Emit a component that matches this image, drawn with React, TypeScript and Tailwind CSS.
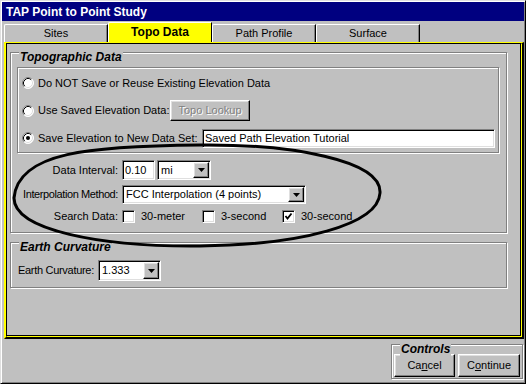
import React from "react";

const raised =
  "border border-t-white border-l-white border-r-black border-b-black shadow-[inset_-1px_-1px_0_#808080,inset_1px_1px_0_#dfdfdf] bg-[#c0c0c0]";
const sunken =
  "border border-t-[#808080] border-l-[#808080] border-r-white border-b-white shadow-[inset_1px_1px_0_#000,inset_-1px_-1px_0_#dfdfdf] bg-white p-px";

function Radio({ checked }: { checked?: boolean }) {
  return (
    <svg width="12" height="12" viewBox="0 0 12 12" className="shrink-0">
      <circle cx="6" cy="6" r="5.5" fill="white" />
      <path d="M2.11 9.89 A5.5 5.5 0 0 1 9.89 2.11" stroke="#808080" fill="none" />
      <path d="M9.89 2.11 A5.5 5.5 0 0 1 2.11 9.89" stroke="#ffffff" fill="none" />
      <path d="M2.82 9.18 A4.5 4.5 0 0 1 9.18 2.82" stroke="#000" fill="none" />
      <path d="M9.18 2.82 A4.5 4.5 0 0 1 2.82 9.18" stroke="#dfdfdf" fill="none" />
      {checked && <circle cx="6" cy="6" r="2" fill="#000" />}
    </svg>
  );
}

function Check({ checked }: { checked?: boolean }) {
  return (
    <div className={`w-[13px] h-[13px] shrink-0 ${sunken} flex items-center justify-center`}>
      {checked && (
        <svg width="9" height="9" viewBox="0 0 9 9">
          <polyline points="1.5,4 3.5,6.5 7.5,1.5" stroke="#000" strokeWidth="1.8" fill="none" />
        </svg>
      )}
    </div>
  );
}

function DropBtn() {
  return (
    <div className={`w-[16px] h-full shrink-0 flex items-center justify-center ${raised}`}>
      <svg width="7" height="4" viewBox="0 0 7 4">
        <polygon points="0,0 7,0 3.5,4" fill="#000" />
      </svg>
    </div>
  );
}

function Select({ value, className }: { value: string; className: string }) {
  return (
    <div className={`flex shrink-0 ${sunken} ${className}`}>
      <span className="flex-1 pl-[2px] flex items-center whitespace-nowrap overflow-hidden">{value}</span>
      <DropBtn />
    </div>
  );
}

function Frame({
  label,
  className,
  children,
}: {
  label?: string;
  className: string;
  children: React.ReactNode;
}) {
  return (
    <div
      className={`relative shrink-0 border border-[#808080] shadow-[1px_1px_0_white,inset_1px_1px_0_white] ${className}`}
    >
      {label && (
        <span className="absolute left-[8px] -top-[3px] px-px bg-[#c0c0c0] font-bold italic text-[12px] leading-[14px] whitespace-nowrap">
          {label}
        </span>
      )}
      {children}
    </div>
  );
}

export default function App() {
  const tabs = ["Sites", "Topo Data", "Path Profile", "Surface"];

  return (
    <div className="relative w-[526px] h-[384px] bg-[#c0c0c0] border border-t-[#dfdfdf] border-l-[#dfdfdf] border-r-black border-b-black p-px shadow-[inset_1px_1px_0_white,inset_-1px_-1px_0_#808080] font-['Liberation_Sans',Arial,sans-serif] text-black text-[11px] flex flex-col overflow-hidden">
      <div className="h-[19px] shrink-0 bg-[#000080] text-white font-bold text-[12px] flex items-center pl-[4px]">
        TAP Point to Point Study
      </div>

      {/* tabs */}
      <div className="flex shrink-0 items-end h-[20px] mt-px pl-[2px]">
        {tabs.map((t) =>
          t === "Topo Data" ? (
            <div
              key={t}
              className="w-[104px] h-[20px] bg-[#ffff00] border-t border-l border-white border-r border-r-black rounded-tl-[2px] flex items-center justify-center font-bold text-[12px] pb-px"
            >
              {t}
            </div>
          ) : (
            <div
              key={t}
              className="w-[104px] h-[18px] border-t border-l border-white border-r border-r-black shadow-[inset_-1px_0_0_#808080] rounded-tl-[2px] flex items-center justify-center"
            >
              {t}
            </div>
          )
        )}
      </div>

      {/* panel: yellow / black double rule all round */}
      <div className="ml-[2px] w-[520px] h-[297px] shrink-0 flex flex-col bg-[#c0c0c0] border-t border-l-2 border-r-2 border-b-2 border-t-[#ffff00] border-l-[#ffff00] border-r-black border-b-black">
        <div className="flex-1 flex flex-col bg-[#c0c0c0] border-t border-l border-t-black border-l-black border-r border-b border-r-[#ffff00] border-b-[#ffff00]">
          <div className="flex-1 flex flex-col bg-[#c0c0c0] border-r border-b border-black">
            <Frame label="Topographic Data" className="ml-[3px] mt-[8px] w-[497px] h-[181px] flex flex-col">
              <Frame className="ml-[6px] mt-[14px] w-[482px] h-[86px] pt-px flex flex-col">
                <div className="flex items-center h-[28px] pl-[4px]">
                  <Radio />
                  <span className="ml-[4px] whitespace-nowrap">Do NOT Save or Reuse Existing Elevation Data</span>
                </div>
                <div className="flex items-center h-[28px] pl-[4px]">
                  <Radio />
                  <span className="ml-[4px] w-[132px] shrink-0 whitespace-nowrap">Use Saved Elevation Data:</span>
                  <div className={`w-[80px] h-[21px] shrink-0 flex items-center justify-center text-[#808080] [text-shadow:1px_1px_0_white] ${raised}`}>
                    Topo Lookup
                  </div>
                </div>
                <div className="flex items-center h-[28px] pl-[4px]">
                  <Radio checked />
                  <span className="ml-[4px] w-[164px] shrink-0 whitespace-nowrap">Save Elevation to New Data Set:</span>
                  <div className={`w-[293px] h-[19px] shrink-0 flex items-center pl-[2px] ${sunken}`}>
                    Saved Path Elevation Tutorial
                  </div>
                </div>
              </Frame>

              <div className="flex flex-col gap-[5px] mt-[7px]">
                <div className="flex items-center h-[20px]">
                  <span className="w-[107px] mr-[4px] shrink-0 text-right whitespace-nowrap">Data Interval:</span>
                  <div className={`w-[33px] h-[20px] shrink-0 flex items-center pl-[2px] ${sunken}`}>0.10</div>
                  <Select value="mi" className="ml-[2px] w-[54px] h-[20px]" />
                </div>
                <div className="flex items-center h-[19px]">
                  <span className="w-[107px] mr-[4px] shrink-0 text-right whitespace-nowrap tracking-[-0.4px]">
                    Interpolation Method:
                  </span>
                  <Select value="FCC Interpolation (4 points)" className="w-[184px] h-[19px]" />
                </div>
                <div className="flex items-center h-[15px]">
                  <span className="w-[107px] mr-[4px] shrink-0 text-right whitespace-nowrap">Search Data:</span>
                  <div className="flex items-center w-[80px] shrink-0">
                    <Check />
                    <span className="ml-[6px]">30-meter</span>
                  </div>
                  <div className="flex items-center w-[80px] shrink-0">
                    <Check />
                    <span className="ml-[6px]">3-second</span>
                  </div>
                  <div className="flex items-center w-[80px] shrink-0">
                    <Check checked />
                    <span className="ml-[6px]">30-second</span>
                  </div>
                </div>
              </div>
            </Frame>

            <Frame label="Earth Curvature" className="ml-[3px] mt-[9px] w-[497px] h-[46px] flex items-center pl-[7px] pt-[11px]">
              <span className="w-[80px] shrink-0 whitespace-nowrap tracking-[-0.3px]">Earth Curvature:</span>
              <Select value="1.333" className="w-[63px] h-[21px]" />
            </Frame>

            <div className="flex-1 bg-[#c0c0c0]" />
          </div>
        </div>
      </div>

      {/* controls */}
      <Frame label="Controls" className="self-end mr-px mt-[5px] w-[132px] h-[35px] flex gap-[3px] pl-[2px] pt-[9px]">
        <button className={`w-[61px] h-[23px] flex items-center justify-center ${raised}`}>
          Ca<u>n</u>cel
        </button>
        <button className={`w-[62px] h-[23px] flex items-center justify-center ${raised}`}>
          C<u>o</u>ntinue
        </button>
      </Frame>

      {/* hand-drawn annotation */}
      <svg
        className="absolute -left-px -top-px pointer-events-none"
        width="526"
        height="384"
        viewBox="0 0 526 384"
      >
        <path
          d="M14 198 C18 152, 90 146, 200 145 C290 144, 382 160, 380 193 C378 225, 300 245, 200 246 C100 247, 14 230, 14 198 Z"
          stroke="#000"
          strokeWidth="3"
          fill="none"
        />
      </svg>
    </div>
  );
}
